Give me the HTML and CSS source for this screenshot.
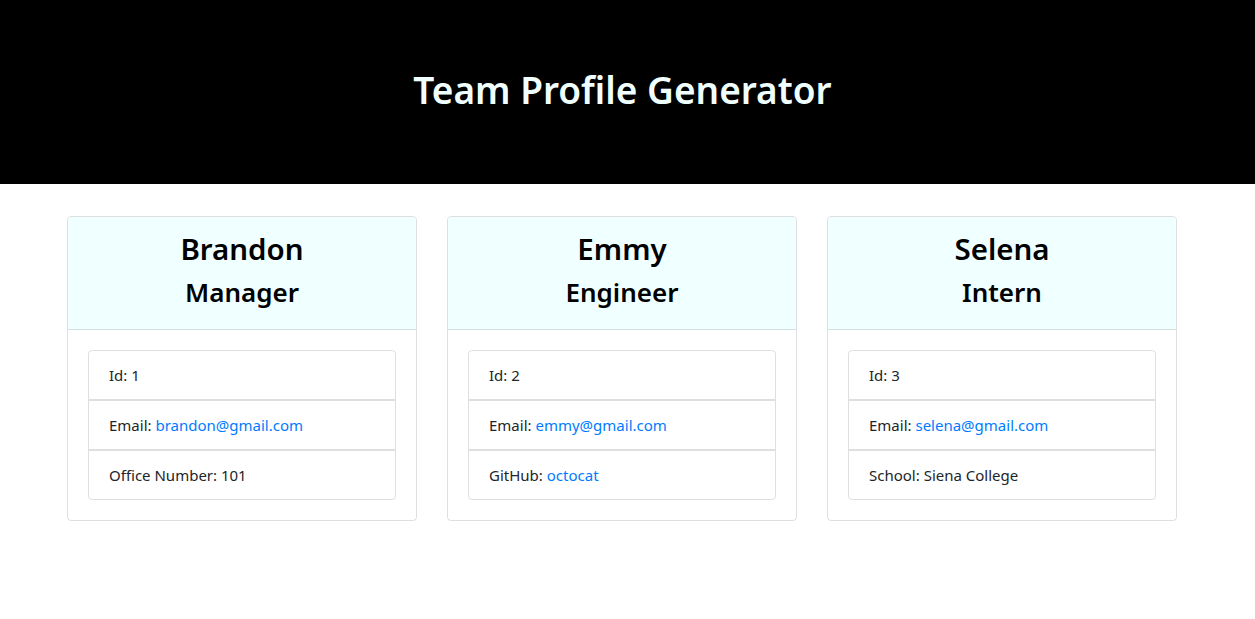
FILE: index.html
```html
<!DOCTYPE html>
<html lang="en">
<head>
<meta charset="utf-8">
<title>Team Profile Generator</title>
<link rel="stylesheet" href="styles.css">
</head>
<body>
<header class="hero">
  <h1 class="hero-title">Team Profile Generator</h1>
</header>
<main class="team">
  <section class="card">
    <div class="card-header">
      <h2 class="card-name">Brandon</h2>
      <h3 class="card-role">Manager</h3>
    </div>
    <div class="card-body">
      <ul class="list">
        <li class="list-item">Id: 1</li>
        <li class="list-item">Email: <a class="link" href="#">brandon@gmail.com</a></li>
        <li class="list-item">Office Number: 101</li>
      </ul>
    </div>
  </section>
  <section class="card">
    <div class="card-header">
      <h2 class="card-name">Emmy</h2>
      <h3 class="card-role">Engineer</h3>
    </div>
    <div class="card-body">
      <ul class="list">
        <li class="list-item">Id: 2</li>
        <li class="list-item">Email: <a class="link" href="#">emmy@gmail.com</a></li>
        <li class="list-item">GitHub: <a class="link" href="#">octocat</a></li>
      </ul>
    </div>
  </section>
  <section class="card">
    <div class="card-header">
      <h2 class="card-name">Selena</h2>
      <h3 class="card-role">Intern</h3>
    </div>
    <div class="card-body">
      <ul class="list">
        <li class="list-item">Id: 3</li>
        <li class="list-item">Email: <a class="link" href="#">selena@gmail.com</a></li>
        <li class="list-item">School: Siena College</li>
      </ul>
    </div>
  </section>
</main>
</body>
</html>
```
FILE: styles.css
```css
* { box-sizing: border-box; }
html, body { margin: 0; padding: 0; }
body {
  font-family: "Noto Sans", "Open Sans", sans-serif;
  font-size: 16px;
  line-height: 1.5;
  color: #212529;
  background: #fff;
}
.hero {
  background: #000;
  padding: 66px 10px 70px 0;
  text-align: center;
}
.hero-title {
  margin: 0;
  font-size: 37px;
  line-height: 48px;
  font-weight: 600;
  color: #f0ffff;
}
.team {
  display: flex;
  gap: 30px;
  padding: 32px 0 0 67px;
}
.card {
  width: 350px;
  border: 1px solid rgba(0,0,0,.125);
  border-radius: 4px;
  overflow: hidden;
}
.card-header {
  background: #f0ffff;
  border-bottom: 1px solid rgba(0,0,0,.125);
  padding: 13px 20px 11px;
  text-align: center;
  color: #000;
}
.card-name {
  margin: 0 0 8px;
  font-size: 29.5px;
  line-height: 38.4px;
  font-weight: 600;
}
.card-role {
  margin: 0 0 8px;
  font-size: 26px;
  line-height: 33.6px;
  font-weight: 600;
}
.card-body {
  padding: 20px;
}
.list {
  list-style: none;
  margin: 0;
  padding: 0;
}
.list-item {
  padding: 12px 20px;
  font-size: 15px;
  line-height: 24px;
  border: 1px solid rgba(0,0,0,.125);
}
.list-item:first-child {
  border-radius: 4px 4px 0 0;
}
.list-item:last-child {
  border-radius: 0 0 4px 4px;
}
.link {
  color: #007bff;
  text-decoration: none;
}
```
